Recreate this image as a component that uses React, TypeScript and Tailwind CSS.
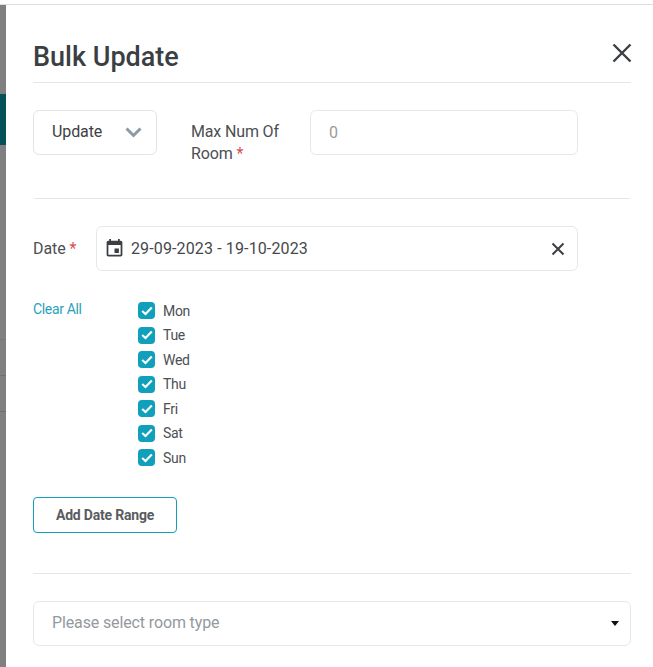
import React from "react";

const days = ["Mon", "Tue", "Wed", "Thu", "Fri", "Sat", "Sun"];

function Star() {
  return <span className="text-[#d9504f]">*</span>;
}

export default function App() {
  return (
    <div className="w-[653px] h-[667px] overflow-hidden bg-white font-['Roboto',sans-serif] text-[#3d4145]">
      <div className="h-[5px] border-b border-[#dedede]" />
      <div className="flex h-[662px]">
        <div className="w-[6px] shrink-0 flex flex-col bg-[#808080]">
          <div className="h-[89px]" />
          <div className="h-[51px] bg-[#055059]" />
          <div className="h-[195px] border-b border-[#777777]" />
          <div className="h-[36px] border-b border-[#707070]" />
          <div className="h-[36px] border-b border-[#707070]" />
        </div>
        <div className="w-[598px] ml-[27px] flex flex-col">
          <div className="h-[78px] border-b border-[#e6e6e6] flex items-start justify-between">
            <h1 className="mt-[35px] text-[27px] leading-[34px] font-medium text-[#3b3f43]">Bulk Update</h1>
            <svg className="mt-[37px] mr-[-2px]" width="22" height="22" viewBox="0 0 22 22" fill="none" stroke="#3b3f43" strokeWidth="2.4">
              <path d="M2.5 2.5 L19.5 19.5 M19.5 2.5 L2.5 19.5" />
            </svg>
          </div>

          <div className="mt-[27px] flex items-start">
            <div className="w-[124px] h-[45px] border border-[#e4e4e4] rounded-[6px] flex items-center justify-between pl-[18px] pr-[14px]">
              <span className="text-base tracking-[-0.1px] leading-[22px] -mt-[2px]">Update</span>
              <svg width="17" height="11" viewBox="0 0 17 11" fill="none" stroke="#8c9aa5" strokeWidth="3">
                <path d="M1.5 1.5 L8.5 8.5 L15.5 1.5" />
              </svg>
            </div>
            <div className="ml-[34px] w-[119px] pt-[11px] text-base leading-[22px] tracking-[-0.15px] text-[#4c4f53]">
              Max Num Of Room <Star />
            </div>
            <div className="h-[45px] w-[268px] border border-[#e8e8e8] rounded-[6px] flex items-center pl-[18px] text-base text-[#9a9a9a]">
              0
            </div>
          </div>

          <div className="mt-[33px] ml-px w-[596px] border-t border-[#e6e6e6]" />

          <div className="mt-[27px] flex items-center">
            <div className="w-[63px] text-base text-[#4c4f53] tracking-[-0.1px]">
              Date <Star />
            </div>
            <div className="h-[45px] w-[482px] border border-[#e8e8e8] rounded-[6px] flex items-center pl-[6.5px] pr-[12px]">
              <svg width="21" height="21" viewBox="0 0 24 24" fill="#3b3f43">
                <path d="M17 12h-5v5h5v-5zM16 1v2H8V1H6v2H5c-1.11 0-1.99.9-1.99 2L3 19c0 1.1.89 2 2 2h14c1.1 0 2-.9 2-2V5c0-1.1-.9-2-2-2h-1V1h-2zm3 18H5V8h14v11z" />
              </svg>
              <span className="ml-[6.5px] text-base tracking-[0.13px] text-[#45494d]">29-09-2023 - 19-10-2023</span>
              <svg className="ml-auto" width="14" height="14" viewBox="0 0 14 14" fill="none" stroke="#3b3f43" strokeWidth="2">
                <path d="M1.5 1.5 L12.5 12.5 M12.5 1.5 L1.5 12.5" />
              </svg>
            </div>
          </div>

          <div className="mt-[31.3px] flex items-start">
            <div className="w-[105px] text-sm leading-[16px] -mt-px tracking-[-0.35px] text-[#2a9fbb]">Clear All</div>
            <div className="flex flex-col gap-[7.5px]">
              {days.map((d) => (
                <div key={d} className="h-[17px] flex items-center">
                  <div className="w-[17px] h-[17px] rounded-[4px] bg-[#10a0bc] flex items-center justify-center">
                    <svg width="12" height="10" viewBox="0 0 12 10" fill="none" stroke="#ffffff" strokeWidth="2.2">
                      <path d="M1.2 5 L4.5 8 L10.8 1.5" />
                    </svg>
                  </div>
                  <span className="ml-2 text-sm tracking-[-0.3px] text-[#4c4f53]">{d}</span>
                </div>
              ))}
            </div>
          </div>

          <button className="mt-[30.7px] w-[144px] h-[36px] border border-[#10a0bc] rounded-[4px] text-sm font-bold tracking-[-0.2px] text-[#5a5c60]">
            Add Date Range
          </button>

          <div className="mt-[40px] border-t border-[#e6e6e6]" />

          <div className="mt-[27px] h-[45px] border border-[#e8e8e8] rounded-[6px] flex items-center justify-between pl-[18px] pr-[11px]">
            <span className="text-base tracking-[-0.13px] leading-[22px] -mt-px text-[#95999d]">Please select room type</span>
            <svg width="8" height="5" viewBox="0 0 8 5" fill="#111111">
              <path d="M0 0 H8 L4 5 Z" />
            </svg>
          </div>
        </div>
      </div>
    </div>
  );
}
